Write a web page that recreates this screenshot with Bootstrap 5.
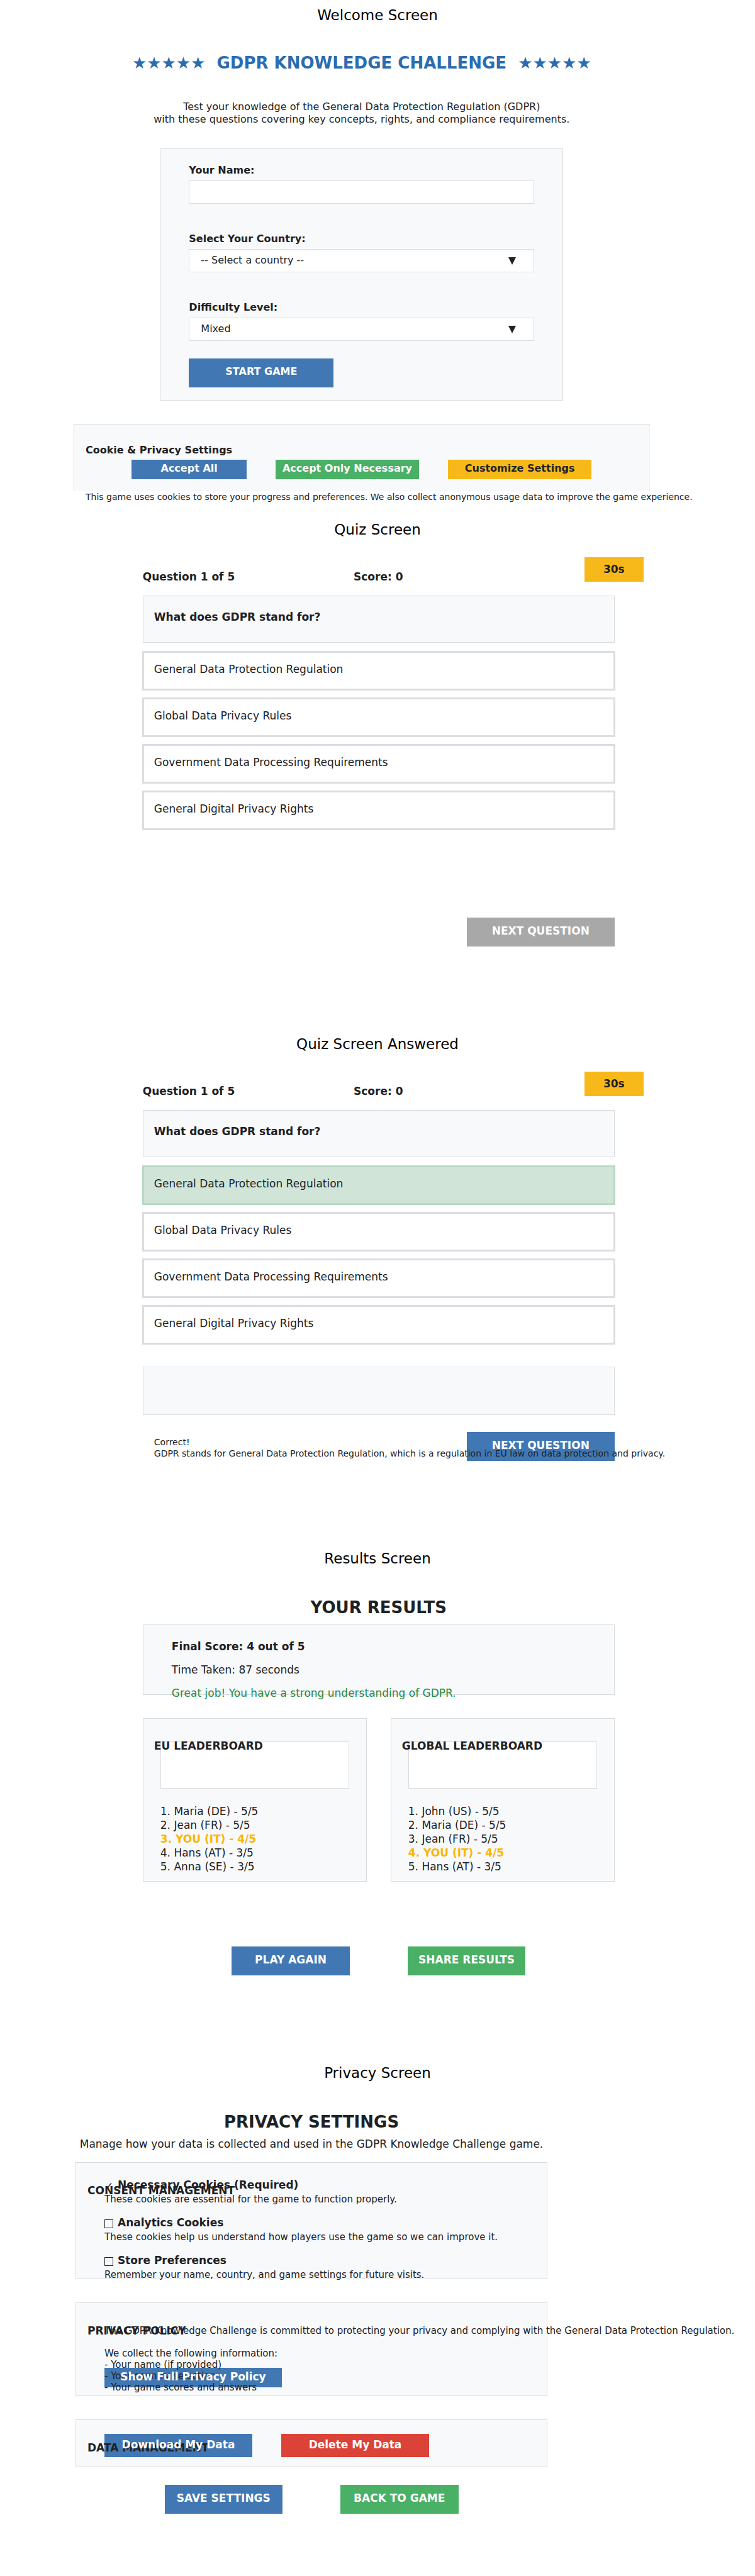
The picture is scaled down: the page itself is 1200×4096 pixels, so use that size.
<!DOCTYPE html>
<html lang="en">
<head>
<meta charset="utf-8">
<meta name="viewport" content="width=device-width, initial-scale=1">
<title>GDPR Knowledge Challenge</title>
<link href="https://cdn.jsdelivr.net/npm/bootstrap@5.3.0/dist/css/bootstrap.min.css" rel="stylesheet">
<style>
  :root { --ink: #202124; --panel: #f8f9fb; --line: #d9dcdf; --blue: #4178b4; --green: #4ab065; --amber: #f6b919; --red: #db4339; --text: 17px; }
  body { font-family: "DejaVu Sans", sans-serif; font-size: var(--text); line-height: 20px; color: var(--ink); background: #fff; overflow-x: hidden; }
  .screen { min-height: 818px; padding-top: 11px; font-size: var(--text); }
  .screen-start { --text: 16px; }
  .screen-title { font-size: 23px; line-height: 26px; font-weight: 400; color: #000; text-align: center; margin: 0; }
  .headline { font-size: 26px; line-height: 30px; font-weight: 700; text-align: center; margin: 50px 0 0; white-space: nowrap; }
  .headline-brand { color: #2b6cb0; margin-top: 48px; }
  .strong-line { font-size: var(--text); line-height: 20px; font-weight: 700; margin: 0; }
  .fine { font-size: 15px; line-height: 18px; margin: 0; }
  .finer { font-size: 14px; }
  .over-text { position: relative; z-index: 1; white-space: nowrap; }

  .stage-wide { width: 76.3%; margin-left: 9.75%; }
  .stage-quiz { width: 62.5%; margin-left: 18.9%; }
  .stage-privacy { width: 62.5%; margin-left: 10%; }
  .panel { background: var(--panel); border: 1px solid var(--line); }

  .act { font-size: var(--text); line-height: 20px; font-weight: 700; color: #fff; border: 0; border-radius: 0; padding: 11px 0 15px; text-align: center; white-space: nowrap; }
  .act:hover { color: #fff; }
  .act span { position: relative; z-index: 2; }
  .act-low { padding: 4px 0 7px; }
  .act-mid { padding: 7px 0 10px; }
  .bg-blue, .bg-blue:hover { background: var(--blue); }
  .bg-green, .bg-green:hover { background: var(--green); }
  .bg-amber, .bg-amber:hover { background: var(--amber); color: var(--ink); }
  .bg-red, .bg-red:hover { background: var(--red); }
  .act.bg-grey:disabled { background: #a8a8a8; color: #fff; opacity: 1; }
  .pair { gap: 92px; }
  .pair .act { width: 25%; }

  .intro { margin: 45px 0 36px; text-align: center; }
  .start-form { width: 70%; margin: 0 auto 37px; padding: 24px 45px 20px; }
  .fields { gap: 46px; }
  .fields .form-label { display: block; font-weight: 700; margin-bottom: 6px; }
  .field { height: 37px; font-size: var(--text); line-height: 20px; color: var(--ink); border: 1px solid var(--line); border-radius: 0; padding: 7px 18px 8px; background-color: #fff; }
  select.field { background-image: url("data:image/svg+xml,%3Csvg xmlns='http://www.w3.org/2000/svg' viewBox='0 0 12 12'%3E%3Cpath fill='%23202124' d='M0 0h12L6 12z'/%3E%3C/svg%3E"); background-size: 12px 12px; background-position: right 28px center; }
  .start-btn { width: 230px; margin-top: 28px; }
  .cookie-bar { border-bottom: 0; border-right-color: #f0f1f4; padding: 31px 0 19px; }
  .cookie-bar .strong-line { padding-left: 18px; }
  .cookie-actions { display: grid; grid-template-columns: 20fr 25fr 25fr; column-gap: 46px; padding: 0 10%; margin-top: 5px; }
  .cookie-note { padding-left: 19px; }

  .quiz-status { min-height: 41px; margin: 31px 0 20px; }
  .quiz-status .count { width: 44.7%; }
  .timer { align-self: flex-start; width: 94px; padding: 9px 0 10px; margin: 0 -46px 0 auto; text-align: center; font-weight: 700; background: var(--amber); }
  .question { padding: 23px 17px 30px; }
  .options { display: flex; flex-direction: column; gap: 11px; margin: 13px -1px 0; }
  .option { font-size: var(--text); line-height: 20px; color: var(--ink); text-align: left; background: #fff; border: 3px solid #dcdde1; padding: 16px 16px 21px; }
  .option-right { background: #d0e5d8; border-color: #b8d9c3; }
  .quiz-foot { display: grid; margin-top: 139px; }
  .quiz-foot > * { grid-area: 1 / 1; }
  .quiz-foot .act { width: 235px; justify-self: end; }
  .feedback { height: 77px; margin-top: 35px; }
  .feedback + .quiz-foot { margin-top: 27px; }
  .explain { padding: 7px 0 0 18px; width: 0; }

  .summary { height: 112px; margin-top: 12px; padding: 24px 45px; display: flex; flex-direction: column; gap: 17px; }
  .praise { color: #258b43; }
  .boards { display: grid; grid-template-columns: 1fr 1fr; gap: 38px; margin: 37px 0 103px; }
  .board { padding: 33px 27px 12px; }
  .board .strong-line { margin: 0 -10px -17px; }
  .board-chart { height: 75px; background: #fff; border: 1px solid var(--line); }
  .ranks { list-style: none; margin: 25px 0 0; padding: 0; line-height: 22px; }
  .ranks .me { color: #fbb503; font-weight: 700; }

  .manage { margin: 10px 0 19px; text-align: center; white-space: nowrap; }
  .setting { position: relative; margin-bottom: 37px; padding-left: 45px; }
  .setting-name { position: absolute; top: 34px; left: 18px; z-index: 1; }
  .consents { height: 186px; padding-top: 25px; display: flex; flex-direction: column; gap: 18px; }
  .consent label { font-weight: 700; display: flex; align-items: center; gap: 7px; margin-bottom: 4px; }
  .tick { appearance: none; width: 14px; height: 14px; margin: 4px 0 0; border: 1px solid var(--ink); flex: none; }
  .tick:checked { border: 0; }
  .tick:checked::before { content: "\2713"; display: block; font: 17px/14px "DejaVu Sans", sans-serif; color: var(--ink); }
  .policy { height: 149px; padding-top: 35px; display: grid; align-items: start; }
  .policy > .fine, .policy > .act { grid-area: 1 / 1; }
  .policy > .fine { width: 0; white-space: pre; }
  .policy > .act { width: 282px; margin-top: 68px; }
  .data-tools { height: 76px; padding-top: 22px; margin-bottom: 28px; gap: 46px; }
  .data-tools .act { width: 235px; }
</style>
</head>
<body>

<section class="screen screen-start">
  <h2 class="screen-title">Welcome Screen</h2>
  <div class="stage-wide">
    <h1 class="headline headline-brand">★★★★★&nbsp; GDPR KNOWLEDGE CHALLENGE &nbsp;★★★★★</h1>
    <p class="intro">Test your knowledge of the General Data Protection Regulation (GDPR)<br>with these questions covering key concepts, rights, and compliance requirements.</p>
    <form class="panel start-form">
      <div class="fields d-flex flex-column">
        <div>
          <label class="form-label" for="name">Your Name:</label>
          <input class="form-control field" id="name" type="text">
        </div>
        <div>
          <label class="form-label" for="country">Select Your Country:</label>
          <select class="form-select field" id="country"><option>-- Select a country --</option></select>
        </div>
        <div>
          <label class="form-label" for="level">Difficulty Level:</label>
          <select class="form-select field" id="level"><option>Mixed</option></select>
        </div>
      </div>
      <button class="btn act bg-blue start-btn" type="button">START GAME</button>
    </form>
    <div class="panel cookie-bar">
      <h3 class="strong-line">Cookie &amp; Privacy Settings</h3>
      <div class="cookie-actions">
        <button class="btn act act-low bg-blue" type="button">Accept All</button>
        <button class="btn act act-low bg-green" type="button">Accept Only Necessary</button>
        <button class="btn act act-low bg-amber" type="button">Customize Settings</button>
      </div>
    </div>
    <p class="fine finer over-text cookie-note">This game uses cookies to store your progress and preferences. We also collect anonymous usage data to improve the game experience.</p>
  </div>
</section>

<section class="screen">
  <h2 class="screen-title">Quiz Screen</h2>
  <div class="stage-quiz">
    <div class="quiz-status d-flex align-items-end">
      <p class="strong-line count">Question 1 of 5</p>
      <p class="strong-line">Score: 0</p>
      <div class="timer">30s</div>
    </div>
    <div class="panel question"><h3 class="strong-line">What does GDPR stand for?</h3></div>
    <div class="options">
      <button class="option" type="button">General Data Protection Regulation</button>
      <button class="option" type="button">Global Data Privacy Rules</button>
      <button class="option" type="button">Government Data Processing Requirements</button>
      <button class="option" type="button">General Digital Privacy Rights</button>
    </div>
    <div class="quiz-foot">
      <button class="btn act bg-grey" type="button" disabled>NEXT QUESTION</button>
    </div>
  </div>
</section>

<section class="screen">
  <h2 class="screen-title">Quiz Screen Answered</h2>
  <div class="stage-quiz">
    <div class="quiz-status d-flex align-items-end">
      <p class="strong-line count">Question 1 of 5</p>
      <p class="strong-line">Score: 0</p>
      <div class="timer">30s</div>
    </div>
    <div class="panel question"><h3 class="strong-line">What does GDPR stand for?</h3></div>
    <div class="options">
      <button class="option option-right" type="button">General Data Protection Regulation</button>
      <button class="option" type="button">Global Data Privacy Rules</button>
      <button class="option" type="button">Government Data Processing Requirements</button>
      <button class="option" type="button">General Digital Privacy Rights</button>
    </div>
    <div class="panel feedback"></div>
    <div class="quiz-foot">
      <button class="btn act bg-blue" type="button"><span>NEXT QUESTION</span></button>
      <p class="fine finer over-text explain">Correct!<br>GDPR stands for General Data Protection Regulation, which is a regulation in EU law on data protection and privacy.</p>
    </div>
  </div>
</section>

<section class="screen">
  <h2 class="screen-title">Results Screen</h2>
  <div class="stage-quiz">
    <h1 class="headline">YOUR RESULTS</h1>
    <div class="panel summary">
      <p class="strong-line">Final Score: 4 out of 5</p>
      <p class="m-0">Time Taken: 87 seconds</p>
      <p class="m-0 praise">Great job! You have a strong understanding of GDPR.</p>
    </div>
    <div class="boards">
      <div class="panel board">
        <h3 class="strong-line over-text">EU LEADERBOARD</h3>
        <div class="board-chart"></div>
        <ol class="ranks">
          <li>1. Maria (DE) - 5/5</li>
          <li>2. Jean (FR) - 5/5</li>
          <li class="me">3. YOU (IT) - 4/5</li>
          <li>4. Hans (AT) - 3/5</li>
          <li>5. Anna (SE) - 3/5</li>
        </ol>
      </div>
      <div class="panel board">
        <h3 class="strong-line over-text">GLOBAL LEADERBOARD</h3>
        <div class="board-chart"></div>
        <ol class="ranks">
          <li>1. John (US) - 5/5</li>
          <li>2. Maria (DE) - 5/5</li>
          <li>3. Jean (FR) - 5/5</li>
          <li class="me">4. YOU (IT) - 4/5</li>
          <li>5. Hans (AT) - 3/5</li>
        </ol>
      </div>
    </div>
    <div class="pair d-flex justify-content-center">
      <button class="btn act bg-blue" type="button">PLAY AGAIN</button>
      <button class="btn act bg-green" type="button">SHARE RESULTS</button>
    </div>
  </div>
</section>

<section class="screen">
  <h2 class="screen-title">Privacy Screen</h2>
  <div class="stage-privacy">
    <h1 class="headline">PRIVACY SETTINGS</h1>
    <p class="manage">Manage how your data is collected and used in the GDPR Knowledge Challenge game.</p>

    <div class="panel setting consents">
      <h3 class="strong-line setting-name">CONSENT MANAGEMENT</h3>
      <div class="consent">
        <label for="necessary"><input class="tick" id="necessary" type="checkbox" checked>Necessary Cookies (Required)</label>
        <p class="fine">These cookies are essential for the game to function properly.</p>
      </div>
      <div class="consent">
        <label for="analytics"><input class="tick" id="analytics" type="checkbox">Analytics Cookies</label>
        <p class="fine">These cookies help us understand how players use the game so we can improve it.</p>
      </div>
      <div class="consent">
        <label for="store"><input class="tick" id="store" type="checkbox">Store Preferences</label>
        <p class="fine">Remember your name, country, and game settings for future visits.</p>
      </div>
    </div>

    <div class="panel setting policy">
      <h3 class="strong-line setting-name">PRIVACY POLICY</h3>
      <button class="btn act act-low bg-blue" type="button"><span>Show Full Privacy Policy</span></button>
      <p class="fine over-text">The GDPR Knowledge Challenge is committed to protecting your privacy and complying with the General Data Protection Regulation.

We collect the following information:
- Your name (if provided)
- Your country selection
- Your game scores and answers</p>
    </div>

    <div class="panel setting data-tools d-flex align-items-start">
      <h3 class="strong-line setting-name">DATA MANAGEMENT</h3>
      <button class="btn act act-mid bg-blue" type="button"><span>Download My Data</span></button>
      <button class="btn act act-mid bg-red" type="button"><span>Delete My Data</span></button>
    </div>

    <div class="pair d-flex justify-content-center">
      <button class="btn act bg-blue" type="button">SAVE SETTINGS</button>
      <button class="btn act bg-green" type="button">BACK TO GAME</button>
    </div>
  </div>
</section>

<script src="https://cdn.jsdelivr.net/npm/bootstrap@5.3.0/dist/js/bootstrap.bundle.min.js"></script>
</body>
</html>
